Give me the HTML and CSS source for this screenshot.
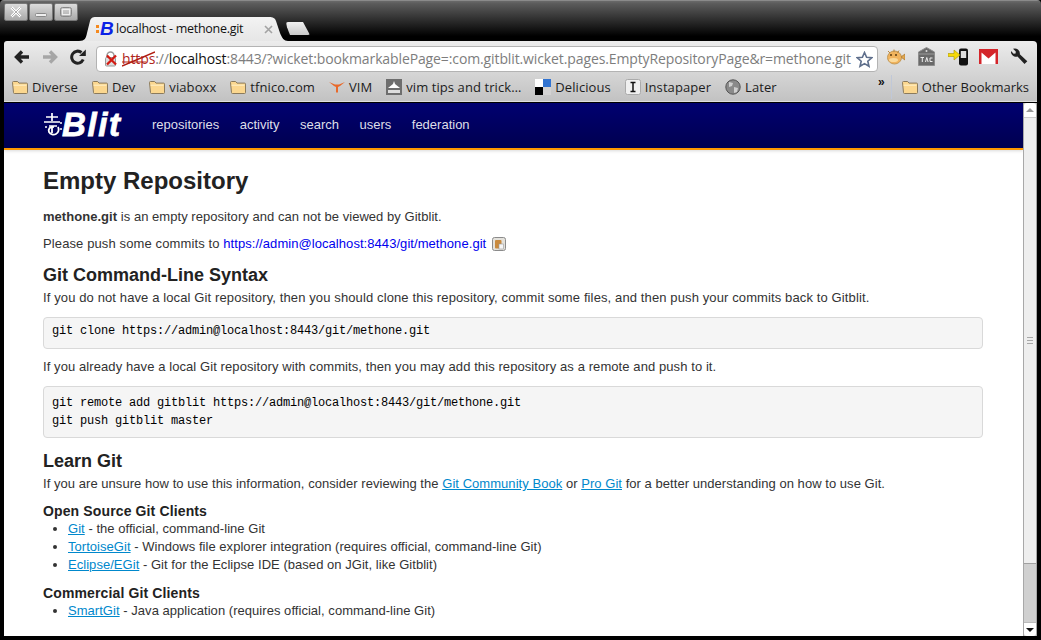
FILE: index.html
```html
<!DOCTYPE html>
<html lang="en">
<head>
<meta charset="utf-8">
<title>localhost - methone.git</title>
<link rel="stylesheet" href="styles.css">
</head>
<body>
<svg class="defs" width="0" height="0" aria-hidden="true">
  <symbol id="folder" viewBox="0 0 16 16">
    <path d="M.5 3.500a1 1 0 0 1 1-1h4.100l1.400 1.600h7.500a1 1 0 0 1 1 1v8.400a1 1 0 0 1-1 1h-12a1 1 0 0 1-1-1z" fill="#fbd78f" stroke="#8a7a5c"/>
    <path d="M1.500 6.200h13" stroke="#fff0c8" fill="none"/>
  </symbol>
</svg>
<div class="window">
  <div class="tabstrip">
    <div class="controls">
      <div class="ctl"><svg width="14" height="12" viewBox="0 0 14 12"><path d="M2.500 1.500l9 9M11.500 1.500l-9 9" stroke="#fff" stroke-width="2.600" fill="none"/><path d="M2.500 1.500l9 9M11.500 1.500l-9 9" stroke="#999" stroke-width=".8" fill="none"/></svg></div>
      <div class="ctl"><svg width="14" height="12" viewBox="0 0 14 12"><rect x="1.500" y="7.500" width="11" height="3" rx="1" fill="#eee" stroke="#888"/></svg></div>
      <div class="ctl"><svg width="14" height="12" viewBox="0 0 14 12"><rect x="1.500" y="1.500" width="11" height="9" rx="2" fill="none" stroke="#888"/><rect x="3.500" y="3.500" width="7" height="5" fill="none" stroke="#eee"/></svg></div>
    </div>
    <div class="tab">
      <span class="fav"><i class="fav-dots"></i><b>B</b></span>
      <span class="tab-title">localhost - methone.git</span>
      <svg class="tab-x" width="9" height="9" viewBox="0 0 9 9"><path d="M1 1l7 7M8 1l-7 7" stroke="#a3a3a3" stroke-width="1.600"/></svg>
    </div>
    <div class="newtab"></div>
  </div>

  <div class="chrome">
    <div class="toolbar">
      <div class="navs">
        <svg width="16" height="14" viewBox="0 0 16 14"><path d="M8 1.500L2.500 7 8 12.500M3 7h12" stroke="#222" stroke-width="3.400" fill="none"/></svg>
        <svg width="16" height="14" viewBox="0 0 16 14"><path d="M8 1.500L13.500 7 8 12.500M13 7H1" stroke="#a6a6a6" stroke-width="3.400" fill="none"/></svg>
        <svg width="16" height="16" viewBox="0 0 16 16"><path d="M13.200 10.500A6 6 0 1 1 11.500 3.500" stroke="#222" stroke-width="3" fill="none"/><path d="M9 7h6.800V.5z" fill="#222"/></svg>
      </div>
      <div class="omnibox">
        <svg class="lock" width="15" height="17" viewBox="0 0 15 17"><path d="M3 7V4.500a3.500 3.500 0 0 1 7 0V7" stroke="#9a9a9a" stroke-width="1.500" fill="none"/><rect x="1.500" y="6.500" width="10" height="8.500" rx="1" fill="#ddd" stroke="#999"/><path d="M3 4.500l9 9M12 4.500l-9 9" stroke="#d31a12" stroke-width="2.300"/></svg>
        <span class="url"><span class="https">https<svg class="strike" width="33" height="16" viewBox="0 0 33 16"><path d="M0 15L33 1" stroke="#b01c10" stroke-width="1.400"/><path d="M0 11h24" stroke="#b01c10" stroke-width="1"/></svg></span><span class="dim">://</span><span class="host">localhost</span><span class="dim">:8443/?wicket:bookmarkablePage=:com.gitblit.wicket.pages.EmptyRepositoryPage&amp;r=methone.git</span></span>
        <svg class="star" width="17" height="17" viewBox="0 0 17 17"><path d="M8.500 1.500l2.100 4.800 5.100.5-3.900 3.400 1.200 5.100-4.500-2.700-4.500 2.700 1.200-5.100L1.300 6.800l5.100-.5z" fill="#fff" stroke="#5f6f8c" stroke-width="1.600"/></svg>
      </div>
      <div class="exts">
        <svg width="19" height="16" viewBox="0 0 19 16"><ellipse cx="8.500" cy="8.500" rx="7" ry="6.500" fill="#f1b35c" stroke="#c49a58"/><path d="M15 8l4-3v6zM2 2l2 2M8 .5v2.500M13 1.500l-1.500 2.500" stroke="#b8863c" fill="#e3a850"/><circle cx="5" cy="6" r="1" fill="#5a3c10"/><circle cx="10" cy="6" r="1" fill="#5a3c10"/><ellipse cx="7.500" cy="11" rx="4.500" ry="2" fill="#fad99a"/></svg>
        <svg width="17" height="19" viewBox="0 0 17 19"><path d="M.5 5L8.500.5 16.500 5v13.500H.5z" fill="#6a6a6a" stroke="#8c8c8c"/><circle cx="8.500" cy="4" r="1" fill="#ddd"/><rect x=".5" y="6.500" width="16" height="1" fill="#999"/><path d="M2.500 10.500h3.500M4.300 10.500V15M7.500 15l1.300-4.500 1.300 4.500M14.500 11h-2.500v3.500h2.500" stroke="#eee" fill="none"/></svg>
        <svg class="ext-phone" width="21" height="18" viewBox="0 0 21 18"><rect x="11" y=".5" width="9" height="17" rx="2" fill="#111"/><rect x="12.800" y="3" width="5.400" height="7" fill="#ddd"/><path d="M0 5.500h6V2l6 5-6 5V8.500H0z" fill="#f5d90a" stroke="#a89400" stroke-width=".6"/></svg>
        <svg width="19" height="15" viewBox="0 0 19 15"><rect width="19" height="15" fill="#d4252a"/><path d="M2.500 15V3.500l7 6 7-6V15z" fill="#fff"/></svg>
        <svg width="17" height="17" viewBox="0 0 17 17"><path d="M2 .8l2.800 2.600-.2 2-2 .4L0 3a5 5 0 0 0 6.500 5.500l7 7.500 2.800-2.800-7.500-7A5 5 0 0 0 2 .8z" fill="#222"/></svg>
      </div>
    </div>
    <div class="bookmarks">
      <span class="bm"><svg class="bi"><use href="#folder"/></svg>Diverse</span>
      <span class="bm"><svg class="bi"><use href="#folder"/></svg>Dev</span>
      <span class="bm"><svg class="bi"><use href="#folder"/></svg>viaboxx</span>
      <span class="bm"><svg class="bi"><use href="#folder"/></svg>tfnico.com</span>
      <span class="bm"><svg class="bi" viewBox="0 0 16 16"><path d="M0 3l6 2.500h4L16 3l-5 4-2 1v5l-1 1-1-1V8L5 7z" fill="#e8692a"/></svg>VIM</span>
      <span class="bm"><svg class="bi" viewBox="0 0 16 16"><rect width="16" height="16" fill="#6e6e6e"/><path d="M8 2l1 3 5 4H2l5-4z" fill="#fff"/><rect x="2" y="11" width="12" height="3" fill="#ddd"/></svg>vim tips and trick…</span>
      <span class="bm"><svg class="bi" viewBox="0 0 16 16"><rect x="8" width="8" height="8" fill="#3274d1"/><rect y="8" width="8" height="8" fill="#000"/><rect width="8" height="8" fill="#fff"/><rect x="8" y="8" width="8" height="8" fill="#d3d2d2"/></svg>Delicious</span>
      <span class="bm"><svg class="bi" viewBox="0 0 16 16"><rect x=".5" y=".5" width="15" height="15" rx="2" fill="#f0f0f0" stroke="#aaa"/><path d="M5.500 3.500h5M5.500 12.500h5M8 3.500v9" stroke="#111" stroke-width="1.500"/></svg>Instapaper</span>
      <span class="bm"><svg class="bi" viewBox="0 0 16 16"><circle cx="8" cy="8" r="7.200" fill="#8a8a8a" stroke="#555"/><path d="M4 3l4 1-1 3-3 1zM9 8l4 1-1 4-3 1z" fill="#cfcfcf"/></svg>Later</span>
      <span class="chev">»</span>
      <span class="bm-sep"></span>
      <span class="bm bm-other"><svg class="bi"><use href="#folder"/></svg>Other Bookmarks</span>
    </div>
  </div>

  <div class="viewport">
    <div class="page">
      <header class="nav">
        <div class="logo"><svg width="18" height="26" viewBox="0 0 18 26"><path d="M8 1v8M2 5h12M0 10h16M5 14h8M9 14v2M1 15h2" stroke="#fff" stroke-width="1.700" fill="none"/><circle cx="17" cy="11" r="1" fill="#fff"/><circle cx="17" cy="17" r="1" fill="#fff"/><path d="M14 15a5 5 0 1 1-9 5c-1-3 1-5 3-5v6" stroke="#fff" stroke-width="1.800" fill="none"/></svg><span class="logo-text">Blit</span></div>
        <nav class="nav-links">
          <a>repositories</a><a>activity</a><a>search</a><a>users</a><a>federation</a>
        </nav>
      </header>
      <main class="content">
        <h1>Empty Repository</h1>
        <p class="p-first"><b>methone.git</b> is an empty repository and can not be viewed by Gitblit.</p>
        <p class="p-push">Please push some commits to <a class="plain">https://admin@localhost:8443/git/methone.git</a><span class="clip"><svg width="14" height="14" viewBox="0 0 14 14"><rect x=".5" y=".5" width="13" height="13" rx="2" fill="#e4e2dc" stroke="#8b8b8b"/><rect x="3" y="3" width="6.500" height="8.500" rx="1" fill="#c98a3e"/><rect x="7" y="7" width="4.500" height="5" fill="#f6f6f6" stroke="#999" stroke-width=".6"/></svg></span></p>
        <h3 class="h-git">Git Command-Line Syntax</h3>
        <p class="p-clone">If you do not have a local Git repository, then you should clone this repository, commit some files, and then push your commits back to Gitblit.</p>
        <pre class="pre-one">git clone https://admin@localhost:8443/git/methone.git</pre>
        <p class="p-mid">If you already have a local Git repository with commits, then you may add this repository as a remote and push to it.</p>
        <pre class="pre-two">git remote add gitblit https://admin@localhost:8443/git/methone.git
git push gitblit master</pre>
        <h3 class="h-learn">Learn Git</h3>
        <p class="p-learn">If you are unsure how to use this information, consider reviewing the <a>Git Community Book</a> or <a>Pro Git</a> for a better understanding on how to use Git.</p>
        <h4 class="h-open">Open Source Git Clients</h4>
        <ul>
          <li><a>Git</a> - the official, command-line Git</li>
          <li><a>TortoiseGit</a> - Windows file explorer integration (requires official, command-line Git)</li>
          <li><a>Eclipse/EGit</a> - Git for the Eclipse IDE (based on JGit, like Gitblit)</li>
        </ul>
        <h4 class="h-comm">Commercial Git Clients</h4>
        <ul>
          <li><a>SmartGit</a> - Java application (requires official, command-line Git)</li>
        </ul>
      </main>
    </div>
    <div class="scrollbar">
      <div class="sb-btn sb-up"><i></i></div>
      <div class="sb-thumb"><span class="grip"></span></div>
      <div class="sb-track"></div>
      <div class="sb-btn sb-down"><i></i></div>
    </div>
  </div>
</div>
</body>
</html>
```
FILE: styles.css
```css
* { box-sizing: border-box; }
html, body { margin: 0; height: 100%; overflow: hidden; background: #000; }
.defs { display: block; height: 0; }
.window { width: 1041px; height: 640px; display: flex; flex-direction: column; background: #000; overflow: hidden; border-radius: 4px 4px 0 0; padding-bottom: 4px; }

.tabstrip { height: 41px; flex: none; display: flex; align-items: flex-start; padding: 3px 0 0 4px; background: linear-gradient(#6a6a6a 0, #5c5c5c 6%, #000 88%); border-top: 1px solid #8a8a8a; }
.controls { display: flex; gap: 1px; margin-top: -1px; }
.ctl { width: 24px; height: 18px; display: flex; align-items: center; justify-content: center; background: linear-gradient(#dcdcdc, #a8a8a8); border: 1px solid #777; border-radius: 2px; }
.tab { width: 209px; height: 24px; margin: 13px 0 0 1px; padding: 0 15px 0 17px; display: flex; align-items: center; background: linear-gradient(#f3f3f3, #e6e6e6); clip-path: path('M0 24C6 24 7 21 8 16L11 4C12 1 13 0 17 0L190 0C194 0 196 1 197 4L201 16C203 21 205 24 209 24Z'); }
.fav { width: 16px; height: 16px; flex: none; display: flex; align-items: center; }
.fav b { font: italic bold 19px/16px "Liberation Sans", sans-serif; color: #0a22e6; margin-left: 1px; }
.fav-dots { width: 3px; height: 8px; flex: none; background: repeating-linear-gradient(#f58a1f 0 3px, transparent 3px 5px); }
.tab-title { font: 12.500px/16px "Open Sans", "Noto Sans", sans-serif; color: #111; margin-left: 4px; flex: 1; white-space: nowrap; letter-spacing: -.27px; }
.tab-x { flex: none; }
.newtab { width: 24px; height: 13px; margin: 18px 0 0 -2px; background: linear-gradient(#f2f2f2, #c8c8c8); clip-path: polygon(0 0, 17px 0, 24px 100%, 4px 100%, 1px 40%); border-radius: 2px; }

.chrome { margin: 0 4px; flex: none; }
.toolbar { height: 31px; display: flex; align-items: center; background: linear-gradient(#ececec, #d6d6d6); border-top-right-radius: 4px; border-top-left-radius: 3px; }
.navs { display: flex; align-items: center; gap: 12px; width: 92px; padding-left: 10px; flex: none; }
.omnibox { width: 782px; height: 26px; margin-top: 5px; background: #fff; border: 1px solid #b3b3b3; border-radius: 4px; display: flex; align-items: center; padding: 0 4px 0 7px; flex: none; }
.lock { flex: none; }
.url { flex: 1; min-width: 0; font: 14px/20px "Open Sans", "Noto Sans", sans-serif; color: #7d7d7d; white-space: nowrap; margin-left: 3px; letter-spacing: -.115px; }
.https { color: #b0261c; position: relative; }
.strike { position: absolute; left: 0; top: 2px; }
.dim { color: #7d7d7d; }
.host { color: #111; }
.star { flex: none; margin-left: 2px; }
.exts { display: flex; align-items: center; gap: 13px; padding-left: 8px; flex: none; }
.ext-phone { margin-right: -3px; }

.bookmarks { height: 30px; display: flex; align-items: center; gap: 14px; padding: 0 8px; background: linear-gradient(#d6d6d6, #c2c2c2); border-bottom: 1px solid #dedede; font: 13px/16px "Open Sans", "Noto Sans", sans-serif; color: #1c1c1c; letter-spacing: .08px; }
.bm { display: flex; align-items: center; gap: 4px; white-space: nowrap; }
.bm-other { letter-spacing: 0; }
.bi { width: 16px; height: 16px; flex: none; }
.chev { margin-left: auto; margin-bottom: 9px; font: bold 12px/12px "Liberation Sans", sans-serif; color: #111; }
.bm-sep { width: 1px; height: 24px; background: #c0c8d8; margin: 0 -4px 0 -8px; }

.viewport { flex: 1; min-height: 0; display: flex; margin: 1px 4px 0; background: #fff; overflow: hidden; }
.page { flex: 1; min-width: 0; overflow: hidden; font: 13px/18px "Liberation Sans", Arial, sans-serif; color: #333; }
.nav { height: 47px; display: flex; align-items: flex-start; background: linear-gradient(#000070, #000050); border-bottom: 2px solid #ff9900; padding: 9px 0 0 40px; box-shadow: 0 1px 3px rgba(0,0,0,.15); }
.logo { display: flex; align-items: center; height: 26px; width: 108px; flex: none; }
.logo-text { font: italic bold 33px/26px "Liberation Sans", sans-serif; color: #fff; letter-spacing: 1.600px; -webkit-text-stroke: .8px #fff; }
.nav-links { display: flex; gap: 20.500px; padding-top: 4px; line-height: 18px; }
.nav-links a { color: #dedee8; text-decoration: none; }

.content { padding: 0 40px 0 39px; }
h1 { font-size: 24px; line-height: 36px; font-weight: bold; margin: 13px 0 0; color: #222; }
p { margin: 0; }
li { margin: 0; line-height: 18px; letter-spacing: .04px; }
a { color: #0088cc; text-decoration: underline; }
a.plain { color: #0000ee; text-decoration: none; letter-spacing: .06px; }
.p-first { margin-top: 9px; letter-spacing: .04px; }
.p-push { margin-top: 9px; letter-spacing: .117px; }
.clip { display: inline-block; vertical-align: -3px; margin-left: 6px; line-height: 14px; }
.clip svg { display: block; }
h3 { font-size: 18px; line-height: 22px; font-weight: bold; color: #222; margin: 0; }
.h-git { margin-top: 11px; }
.p-clone { margin-top: 3px; letter-spacing: .117px; }
pre { font: 12px/18px "Liberation Mono", "Courier New", monospace; letter-spacing: -.2px; color: #000; background: #f5f5f5; border: 1px solid #d9d9d9; border-radius: 4px; margin: 0; }
.pre-one { padding: 4px 8px 8px; margin-top: 10px; }
.p-mid { margin-top: 9px; letter-spacing: .085px; }
.pre-two { padding: 7px 8px 7px; margin-top: 10px; }
.h-learn { margin-top: 12px; }
.p-learn { margin-top: 3px; letter-spacing: .046px; }
h4 { font-size: 14px; line-height: 18px; font-weight: bold; color: #222; letter-spacing: .13px; margin: 0; }
.h-open { margin-top: 9px; }
.h-comm { margin-top: 10px; }
ul { margin: 0 0 0 25px; padding: 0; }

.scrollbar { width: 14px; flex: none; display: flex; flex-direction: column; background: #d0d0d0; border-left: 1px solid #a8a8a8; border-right: 1px solid #a8a8a8; }
.sb-btn { height: 15px; background: #fff; display: flex; align-items: center; justify-content: center; flex: none; }
.sb-btn i { width: 0; height: 0; border-left: 4px solid transparent; border-right: 4px solid transparent; }
.sb-up i { border-bottom: 4px solid #999; }
.sb-down i { border-top: 4px solid #111; }
.sb-up { border-bottom: 1px solid #ccc; border-radius: 3px 3px 0 0; }
.sb-down { border-top: 1px solid #bbb; border-radius: 0 0 3px 3px; height: 14px; }
.sb-thumb { height: 446px; flex: none; background: #eeeeee; border-bottom: 1px solid #a0a0a0; display: flex; align-items: center; justify-content: center; }
.grip { width: 6px; height: 7px; background: repeating-linear-gradient(#a8a8a8 0 1px, transparent 1px 3px); }
.sb-track { flex: 1; }
```
